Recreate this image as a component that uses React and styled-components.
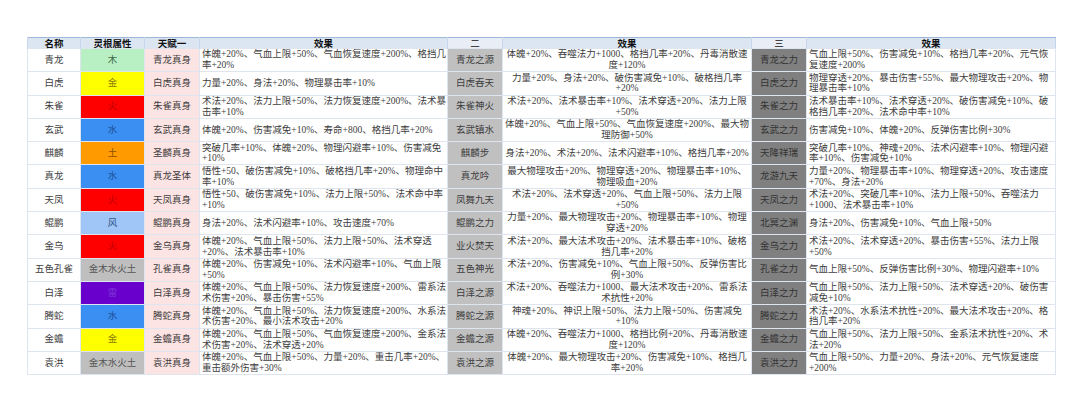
import styled, { createGlobalStyle } from "styled-components";

const GlobalStyle = createGlobalStyle`
  html, body { margin: 0; padding: 0; background: #ffffff; }
  body { font-family: "Liberation Serif", "Noto Sans CJK SC", serif; }
`;

const rows = [
  { name: "青龙", root: "木", t1: "青龙真身",
    e1: ["体魄+20%、气血上限+50%、气血恢复速度+200%、格挡几", "率+20%"],
    t2: "青龙之源", e2: ["体魄+20%、吞噬法力+1000、格挡几率+20%、丹毒消散速", "度+120%"],
    t3: "青龙之力", e3: ["气血上限+50%、伤害减免+10%、格挡几率+20%、元气恢", "复速度+200%"] },
  { name: "白虎", root: "金", t1: "白虎真身",
    e1: ["力量+20%、身法+20%、物理暴击率+10%"],
    t2: "白虎吞天", e2: ["力量+20%、身法+20%、破伤害减免+10%、破格挡几率", "+20%"],
    t3: "白虎之力", e3: ["物理穿透+20%、暴击伤害+55%、最大物理攻击+20%、物", "理暴击率+10%"] },
  { name: "朱雀", root: "火", t1: "朱雀真身",
    e1: ["术法+20%、法力上限+50%、法力恢复速度+200%、法术暴", "击率+10%"],
    t2: "朱雀神火", e2: ["术法+20%、法术暴击率+10%、法术穿透+20%、法力上限", "+50%"],
    t3: "朱雀之力", e3: ["法术暴击率+10%、法术穿透+20%、破伤害减免+10%、破", "格挡几率+20%、法术命中率+10%"] },
  { name: "玄武", root: "水", t1: "玄武真身",
    e1: ["体魄+20%、伤害减免+10%、寿命+800、格挡几率+20%"],
    t2: "玄武镇水", e2: ["体魄+20%、气血上限+50%、气血恢复速度+200%、最大物", "理防御+50%"],
    t3: "玄武之力", e3: ["伤害减免+10%、体魄+20%、反弹伤害比例+30%"] },
  { name: "麒麟", root: "土", t1: "圣麟真身",
    e1: ["突破几率+10%、体魄+20%、物理闪避率+10%、伤害减免", "+10%"],
    t2: "麒麟步", e2: ["身法+20%、术法+20%、法术闪避率+10%、格挡几率+20%"],
    t3: "天降祥瑞", e3: ["突破几率+10%、神魂+20%、法术闪避率+10%、物理闪避", "率+10%、伤害减免+10%"] },
  { name: "真龙", root: "水", t1: "真龙圣体",
    e1: ["悟性+50、破伤害减免+10%、破格挡几率+20%、物理命中", "率+10%"],
    t2: "真龙吟", e2: ["最大物理攻击+20%、物理穿透+20%、物理暴击率+10%、", "物理吸血+20%"],
    t3: "龙游九天", e3: ["力量+20%、物理暴击率+10%、物理穿透+20%、攻击速度", "+70%、身法+20%"] },
  { name: "天凤", root: "火", t1: "天凤真身",
    e1: ["悟性+50、破伤害减免+10%、法力上限+50%、法术命中率", "+10%"],
    t2: "凤舞九天", e2: ["术法+20%、法术穿透+20%、气血上限+50%、法力上限", "+50%"],
    t3: "天凤之力", e3: ["术法+20%、突破几率+10%、法力上限+50%、吞噬法力", "+1000、法术暴击率+10%"] },
  { name: "鲲鹏", root: "风", t1: "鲲鹏真身",
    e1: ["身法+20%、法术闪避率+10%、攻击速度+70%"],
    t2: "鲲鹏之力", e2: ["力量+20%、最大物理攻击+20%、物理暴击率+10%、物理", "穿透+20%"],
    t3: "北冥之渊", e3: ["身法+20%、伤害减免+10%、气血上限+50%"] },
  { name: "金乌", root: "火", t1: "金乌真身",
    e1: ["体魄+20%、气血上限+50%、法力上限+50%、法术穿透", "+20%、法术暴击率+10%"],
    t2: "业火焚天", e2: ["术法+20%、最大法术攻击+20%、法术暴击率+10%、破格", "挡几率+20%"],
    t3: "金乌之力", e3: ["术法+20%、法术穿透+20%、暴击伤害+55%、法力上限", "+50%"] },
  { name: "五色孔雀", root: "金木水火土", t1: "孔雀真身",
    e1: ["体魄+20%、伤害减免+10%、法术闪避率+10%、气血上限", "+50%"],
    t2: "五色神光", e2: ["术法+20%、伤害减免+10%、气血上限+50%、反弹伤害比", "例+30%"],
    t3: "孔雀之力", e3: ["气血上限+50%、反弹伤害比例+30%、物理闪避率+10%"] },
  { name: "白泽", root: "雷", t1: "白泽真身",
    e1: ["体魄+20%、气血上限+50%、法力恢复速度+200%、雷系法", "术伤害+20%、暴击伤害+55%"],
    t2: "白泽之源", e2: ["术法+20%、吞噬法力+1000、最大法术攻击+20%、雷系法", "术抗性+20%"],
    t3: "白泽之力", e3: ["气血上限+50%、法力上限+50%、法术穿透+20%、破伤害", "减免+10%"] },
  { name: "腾蛇", root: "水", t1: "腾蛇真身",
    e1: ["体魄+20%、气血上限+50%、法力恢复速度+200%、水系法", "术伤害+20%、最小法术攻击+20%"],
    t2: "腾蛇之源", e2: ["神魂+20%、神识上限+50%、法力上限+50%、伤害减免", "+10%"],
    t3: "腾蛇之力", e3: ["术法+20%、水系法术抗性+20%、最大法术攻击+20%、格", "挡几率+20%"] },
  { name: "金蟾", root: "金", t1: "金蟾真身",
    e1: ["体魄+20%、气血上限+50%、气血恢复速度+200%、金系法", "术伤害+20%、法术穿透+20%"],
    t2: "金蟾之源", e2: ["体魄+20%、吞噬法力+1000、格挡比例+20%、丹毒消散速", "度+120%"],
    t3: "金蟾之力", e3: ["气血上限+50%、法力上限+50%、金系法术抗性+20%、术", "法+20%"] },
  { name: "袁洪", root: "金木水火土", t1: "袁洪真身",
    e1: ["体魄+20%、气血上限+50%、力量+20%、重击几率+20%、", "重击额外伤害+30%"],
    t2: "袁洪之源", e2: ["体魄+20%、最大物理攻击+20%、伤害减免+10%、格挡几", "率+20%"],
    t3: "袁洪之力", e3: ["气血上限+50%、力量+20%、身法+20%、元气恢复速度", "+200%"] },
];

const rootColors = {
  "木": { bg: "#b8f0c4", fg: "#3c6a44" },
  "金": { bg: "#ffff00", fg: "#8a7a00" },
  "火": { bg: "#ff0000", fg: "#c00000" },
  "水": { bg: "#3b8ff2", fg: "#1d4f96" },
  "土": { bg: "#ff9a00", fg: "#8a5200" },
  "风": { bg: "#9fc6f7", fg: "#2f5588" },
  "雷": { bg: "#6a00cc", fg: "#7c36d8" },
  "金木水火土": { bg: "#bfbfbf", fg: "#555555" },
};

const Page = styled.div`
  padding: 37px 0 0 27px;
`;

const Table = styled.table`
  border-collapse: collapse;
  table-layout: fixed;
  width: 1028px;
  border: 1px solid #c3d3e8;
  color: #3d3d3d;
  font-size: 9.5px;
  line-height: 10.8px;
`;

const HeadRow = styled.tr`
  height: 11px;
  background: #dce6f2;
  border-top: 1px solid #9db8da;
`;

const Th = styled.th`
  padding: 0;
  font-family: "Noto Sans CJK SC", sans-serif;
  font-size: 9.5px;
  line-height: 10px;
  color: #111111;
  font-weight: ${(p) => (p.$thin ? 400 : 700)};
  background: ${(p) => (p.$thin ? "#e9eef6" : "#dce6f2")};
  border-left: 1px solid #c9d7ea;
  text-align: center;
`;

const Row = styled.tr`
  height: 23.3px;
`;

const Cell = styled.td`
  padding: 0 ${(p) => (p.$left ? "2px" : "1px")};
  background: ${(p) => p.$bg || "#ffffff"};
  color: ${(p) => p.$fg || "#3d3d3d"};
  text-align: ${(p) => (p.$left ? "left" : "center")};
  vertical-align: middle;
  white-space: nowrap;
  overflow: hidden;
  border: 1px solid #dfe5ee;
`;

const Lines = ({ lines }) =>
  lines.map((l, i) => (
    <span key={i}>
      {i > 0 && <br />}
      {l}
    </span>
  ));

export default function App() {
  return (
    <Page>
      <GlobalStyle />
      <Table>
        <colgroup>
          <col style={{ width: 53 }} />
          <col style={{ width: 64 }} />
          <col style={{ width: 55 }} />
          <col style={{ width: 248 }} />
          <col style={{ width: 55 }} />
          <col style={{ width: 249 }} />
          <col style={{ width: 55 }} />
          <col style={{ width: 249 }} />
        </colgroup>
        <thead>
          <HeadRow>
            <Th>名称</Th>
            <Th>灵根属性</Th>
            <Th>天赋一</Th>
            <Th>效果</Th>
            <Th $thin>二</Th>
            <Th>效果</Th>
            <Th $thin>三</Th>
            <Th>效果</Th>
          </HeadRow>
        </thead>
        <tbody>
          {rows.map((r) => {
            const rc = rootColors[r.root];
            return (
              <Row key={r.name}>
                <Cell>{r.name}</Cell>
                <Cell $bg={rc.bg} $fg={rc.fg}>{r.root}</Cell>
                <Cell $bg="#fde4e4">{r.t1}</Cell>
                <Cell $left><Lines lines={r.e1} /></Cell>
                <Cell $bg="#c0c0c0">{r.t2}</Cell>
                <Cell><Lines lines={r.e2} /></Cell>
                <Cell $bg="#808080" $fg="#333333">{r.t3}</Cell>
                <Cell $left><Lines lines={r.e3} /></Cell>
              </Row>
            );
          })}
        </tbody>
      </Table>
    </Page>
  );
}
